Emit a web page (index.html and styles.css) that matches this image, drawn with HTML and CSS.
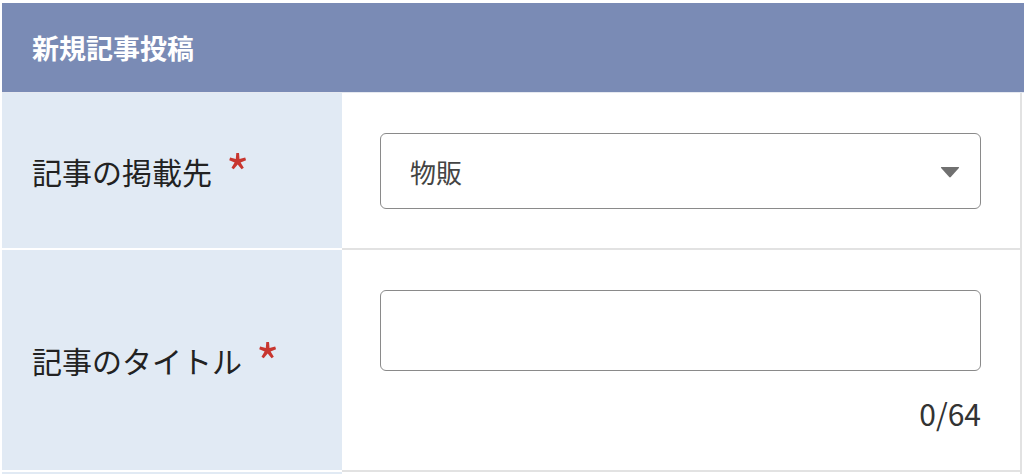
FILE: index.html
```html
<!DOCTYPE html>
<html lang="ja">
<head>
    <meta charset="UTF-8">
    <meta name="viewport" content="width=device-width, initial-scale=1.0">
    <title>新規記事投稿</title>
    <link rel="stylesheet" href="styles.css">
</head>
<body>
    <div class="post-panel">
        <div class="panel-head">新規記事投稿</div>

        <div class="form-row">
            <div class="form-label">記事の掲載先<span class="required">*</span></div>
            <div class="form-field">
                <div class="select-box">
                    <span class="select-value">物販</span>
                    <svg class="select-arrow" width="20" height="12" viewBox="0 0 20 12">
                        <path d="M1.5 1 H18.5 Q19.6 1 18.9 2 L10.8 11 Q10 11.8 9.2 11 L1.1 2 Q0.4 1 1.5 1 Z" fill="#707070"/>
                    </svg>
                </div>
            </div>
        </div>

        <div class="form-row">
            <div class="form-label">記事のタイトル<span class="required">*</span></div>
            <div class="form-field">
                <input type="text" class="text-input">
                <div class="counter">0/64</div>
            </div>
        </div>

        <div class="form-row">
            <div class="form-label"></div>
            <div class="form-field">
                <textarea class="text-area"></textarea>
            </div>
        </div>
    </div>
</body>
</html>
```

FILE: styles.css
```css
body {
    margin: 0;
    padding: 3px 0 0 2px;
    background: #ffffff;
    font-family: "Noto Sans CJK JP", "Noto Sans", sans-serif;
    color: #222;
}
.post-panel {
    width: 1020px;
}
.panel-head {
    height: 89px;
    margin-right: -2px;
    background-color: #7a8bb5;
    color: white;
    font-size: 27px;
    font-weight: bold;
    padding-left: 30px;
    display: flex;
    align-items: center;
    border-bottom: 1px solid #e6e9f0;
}
.form-row {
    display: grid;
    grid-template-columns: 340px 1fr;
}
.form-label {
    background-color: #e1eaf4;
    border-bottom: 2px solid white;
    padding-left: 30px;
    display: flex;
    align-items: center;
    font-size: 30px;
    line-height: 1;
}
.required {
    color: #c8362f;
    font-size: 50px;
    line-height: 1;
    margin-left: 14px;
    position: relative;
    top: 0;
}
.form-field {
    border-bottom: 2px solid #e2e2e2;
    border-right: 2px solid #e2e2e2;
    padding: 40px 39px 39px 38px;
}
.select-box {
    height: 74px;
    border: 1px solid #8a8a8a;
    border-radius: 6px;
    display: flex;
    align-items: center;
    justify-content: space-between;
    padding: 0 20px 0 29px;
}
.select-value {
    font-size: 26px;
    color: #444;
}
.select-arrow {
    display: block;
    margin-top: 2px;
}
.text-input {
    display: block;
    box-sizing: border-box;
    width: 100%;
    height: 81px;
    border: 1px solid #8a8a8a;
    border-radius: 6px;
    margin: 0;
    font-size: 26px;
    padding: 0 29px;
}
.counter {
    text-align: right;
    font-size: 30px;
    line-height: 40px;
    margin-top: 22px;
    color: #333;
}
.form-row:nth-child(3) .form-field {
    padding-bottom: 37px;
}
.text-area {
    display: block;
    box-sizing: border-box;
    width: 100%;
    height: 240px;
    border: 1px solid #8a8a8a;
    border-radius: 6px;
    resize: none;
}
```
